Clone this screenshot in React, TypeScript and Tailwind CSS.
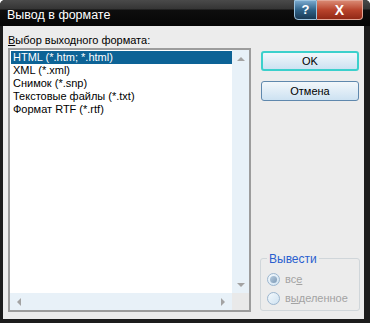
import React from "react";

const items = [
  "HTML (*.htm; *.html)",
  "XML (*.xml)",
  "Снимок (*.snp)",
  "Текстовые файлы (*.txt)",
  "Формат RTF (*.rtf)",
];

function Arrow({ dir }: { dir: "up" | "down" | "left" | "right" }) {
  const pts = {
    up: "0,4 4,0 8,4",
    down: "0,0 8,0 4,4",
    left: "4,0 4,8 0,4",
    right: "0,0 0,8 4,4",
  }[dir];
  const vertical = dir === "up" || dir === "down";
  return (
    <svg width={vertical ? 8 : 4} height={vertical ? 4 : 8} viewBox={vertical ? "0 0 8 4" : "0 0 4 8"}>
      <polygon points={pts} fill="#a3a3a3" />
    </svg>
  );
}

function Radio({ checked, label }: { checked?: boolean; label: [string, string, string] }) {
  return (
    <div className="flex items-center gap-[5px] h-[19px]">
      <div className="w-[13px] h-[13px] rounded-full border border-[#9cb6cf] bg-gradient-to-br from-[#f4f9fd] to-[#cfe2f1] flex items-center justify-center">
        {checked && <div className="w-[7px] h-[7px] rounded-full bg-gradient-to-br from-[#b8cde0] to-[#7e9ab6]" />}
      </div>
      <span className="text-[#a3a3a3]">
        {label[0]}
        <span className="underline">{label[1]}</span>
        {label[2]}
      </span>
    </div>
  );
}

export default function App() {
  return (
    <div
      className="w-[370px] h-[323px] flex flex-col bg-[#1c1c1c] rounded-t-[5px] overflow-hidden"
      style={{ fontFamily: '"Liberation Sans", Arial, sans-serif' }}
    >
      {/* title bar */}
      <div className="h-[26px] flex items-start justify-between bg-[linear-gradient(to_bottom,#4a4a4a_0px,#353535_9px,#0e0e0e_10px,#060606_26px)]">
        <div className="pl-[7px] pt-[8px] text-[12.5px] leading-[15px] text-white">Вывод в формате</div>
        <div className="flex mr-[7px] h-[20px]">
          <div className="w-[23px] h-[20px] rounded-bl-[4px] border border-[#9cc4e0] bg-gradient-to-b from-[#77a7cc] via-[#2f6288] to-[#1b3a55] flex items-center justify-center text-white font-bold text-[13px]">
            ?
          </div>
          <div className="w-[46px] h-[20px] rounded-br-[4px] border border-l-0 border-[#e3a696] bg-gradient-to-b from-[#d88670] via-[#b8432c] to-[#922916] flex items-center justify-center text-white font-bold text-[14px]">
            X
          </div>
        </div>
      </div>

      {/* client area */}
      <div className="flex-1 ml-[3px] mr-[6px] mb-[4px] bg-[#ececec] flex pl-[5px] text-[11px] leading-[13px] text-black">
        <div className="flex flex-col pt-[8px]">
          <div className="h-[14px]">
            <span className="underline">В</span>ыбор выходного формата:
          </div>
          <div className="w-[243px] h-[264px] border-2 border-[#9c9c9c] bg-white flex flex-col">
            <div className="flex flex-1">
              <div className="flex-1 pl-[1px] pt-[1px]">
                {items.map((t, i) => (
                  <div
                    key={t}
                    className={
                      "h-[13px] pl-[2px] whitespace-nowrap " +
                      (i === 0 ? "bg-[#0d6396] text-white" : "")
                    }
                  >
                    {t}
                  </div>
                ))}
              </div>
              <div className="w-[17px] bg-[#e8f1f8] flex flex-col items-center justify-between pt-[7px] pb-[6px]">
                <Arrow dir="up" />
                <Arrow dir="down" />
              </div>
            </div>
            <div className="h-[17px] flex">
              <div className="flex-1 bg-[#e8f1f8] flex items-center justify-between pl-[7px] pr-[7px]">
                <Arrow dir="left" />
                <Arrow dir="right" />
              </div>
              <div className="w-[17px] bg-[#e9e9e9]" />
            </div>
          </div>
        </div>

        <div className="ml-[9px] w-[100px] flex flex-col pt-[25px]">
          <button className="ml-[1px] w-[98px] h-[20px] rounded-[3px] border-2 border-[#3cd0cc] bg-gradient-to-b from-[#f2f7fb] to-[#cde2f2] text-[11px]">
            OK
          </button>
          <button className="ml-[1px] mt-[10px] w-[98px] h-[20px] rounded-[3px] border border-[#5f88ad] bg-gradient-to-b from-[#f2f7fb] to-[#cde2f2] text-[11px]">
            Отмена
          </button>
          <div className="mt-[157px] relative h-[53px] rounded-[3px] border border-[#d0d6da] pl-[6px] pt-[11px]">
            <div className="absolute -top-[7px] left-[6px] px-[2px] bg-[#ececec] text-[#2a5fcf] text-[12px] leading-[14px]">
              Вывести
            </div>
            <Radio checked label={["вс", "е", ""]} />
            <Radio label={["в", "ы", "деленное"]} />
          </div>
        </div>
      </div>
    </div>
  );
}
